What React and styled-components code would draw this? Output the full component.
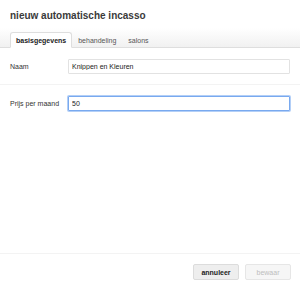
import React from 'react';
import styled, { createGlobalStyle } from 'styled-components';

const GlobalStyle = createGlobalStyle`
  html, body {
    margin: 0;
    padding: 0;
    background: #fff;
  }
  body {
    font-family: "Liberation Sans", Arial, sans-serif;
    color: #333;
  }
`;

const tabs = ['basisgegevens', 'behandeling', 'salons'];

const App = () => {
  return (
    <>
      <GlobalStyle />
      <Dialog>
        <Title>nieuw automatische incasso</Title>
        <TabBar>
          {tabs.map((tab, i) => (
            <Tab key={tab} $active={i === 0}>
              {tab}
            </Tab>
          ))}
        </TabBar>
        <Body>
          <Row>
            <Label>Naam</Label>
            <Input type="text" defaultValue="Knippen en Kleuren" />
          </Row>
          <Row $last>
            <Label>Prijs per maand</Label>
            <Input type="text" defaultValue="50" $focused />
          </Row>
        </Body>
        <Footer>
          <Button>annuleer</Button>
          <Button disabled>bewaar</Button>
        </Footer>
      </Dialog>
    </>
  );
};

const Dialog = styled.div`
  display: flex;
  flex-direction: column;
  width: 300px;
  height: 290px;
  box-sizing: border-box;
`;

const Title = styled.h1`
  margin: 0;
  padding: 9px 10px 0;
  height: 19px;
  font-size: 10px;
  line-height: 14px;
  font-weight: bold;
  color: #3a3a3a;
`;

const TabBar = styled.div`
  display: flex;
  align-items: flex-end;
  height: 19px;
  padding: 0 10px;
  background: linear-gradient(to bottom, #ffffff 0%, #f1f1f1 100%);
  border-bottom: 1px solid #dedede;
`;

const Tab = styled.div`
  box-sizing: border-box;
  height: 16px;
  margin-bottom: -1px;
  padding: 0 5px;
  font-size: 7px;
  line-height: 15px;
  color: ${(p) => (p.$active ? '#222' : '#555')};
  font-weight: ${(p) => (p.$active ? 'bold' : 'normal')};
  background: ${(p) => (p.$active ? '#fff' : 'transparent')};
  border: 1px solid ${(p) => (p.$active ? '#dedede' : 'transparent')};
  border-bottom-color: ${(p) => (p.$active ? '#fff' : 'transparent')};
  border-radius: 3px 3px 0 0;
`;

const Body = styled.div`
  flex: 1;
`;

const Row = styled.div`
  display: flex;
  align-items: center;
  padding: 11px 10px 10px;
  border-bottom: ${(p) => (p.$last ? 'none' : '1px solid #f3f3f3')};
`;

const Label = styled.label`
  width: 58px;
  flex-shrink: 0;
  font-size: 7px;
  color: #333;
`;

const Input = styled.input`
  flex: 1;
  box-sizing: border-box;
  height: 15px;
  margin: 0;
  padding: 0 3px;
  font-family: "Liberation Sans", Arial, sans-serif;
  font-size: 7px;
  color: #222;
  border: 1px solid ${(p) => (p.$focused ? '#79a9ef' : '#e2e2e2')};
  box-shadow: ${(p) => (p.$focused ? '0 0 0 1px #b3cff7' : 'none')};
  border-radius: 1px;
  outline: none;
  background: #fff;
`;

const Footer = styled.div`
  display: flex;
  justify-content: flex-end;
  gap: 6px;
  padding: 10px 9px 10px;
  border-top: 1px solid #f3f3f3;
`;

const Button = styled.button`
  box-sizing: border-box;
  width: 46px;
  height: 16px;
  padding: 0;
  font-family: "Liberation Sans", Arial, sans-serif;
  font-size: 7px;
  font-weight: bold;
  color: #222;
  background: #eeeeee;
  border: 1px solid #dcdcdc;
  border-radius: 2px;

  &:disabled {
    color: #bdbdbd;
    font-weight: normal;
    background: #f6f6f6;
    border-color: #e6e6e6;
  }
`;

export default App;
